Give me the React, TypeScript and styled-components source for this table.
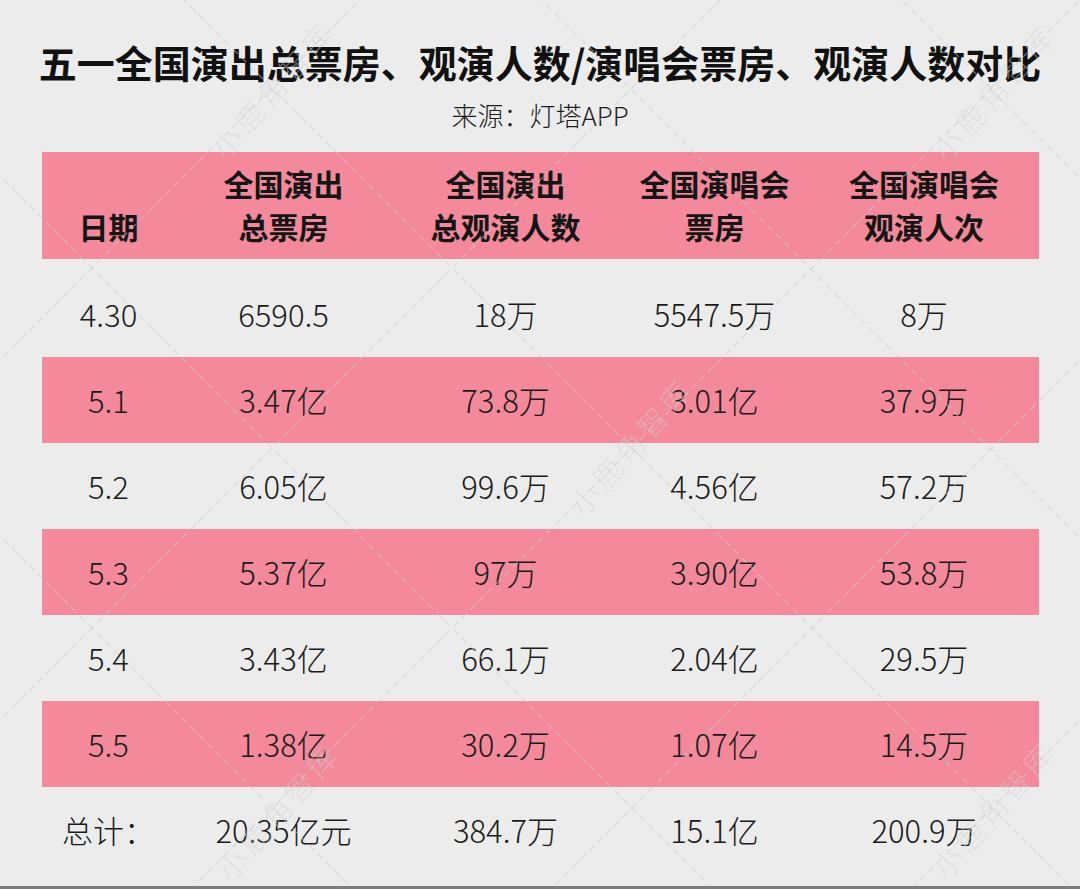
import React from "react";
import styled, { createGlobalStyle } from "styled-components";

const GlobalStyle = createGlobalStyle`
  html, body {
    margin: 0;
    padding: 0;
    background: #ececec;
  }
  body {
    font-family: "Noto Sans CJK SC", "Noto Sans", sans-serif;
  }
`;

const PINK = "#f3899a";
const COLS = "134px 216px 228px 190px 229px";

const Page = styled.div`
  position: relative;
  width: 1080px;
  height: 889px;
  box-sizing: border-box;
  background: #ececec;
  border-bottom: 3px solid #7d7d7d;
  padding-top: 40px;
  display: flex;
  flex-direction: column;
  align-items: center;
  overflow: hidden;
`;

const Title = styled.h1`
  margin: 0;
  font-size: 38px;
  line-height: 44px;
  font-weight: 700;
  color: #111;
  white-space: nowrap;
`;

const Source = styled.div`
  margin-top: 14px;
  font-size: 26px;
  line-height: 34px;
  font-weight: 300;
  color: #1e1e1e;
`;

const Table = styled.div`
  margin-top: 20px;
  width: 997px;
`;

const HeaderRow = styled.div`
  display: grid;
  grid-template-columns: ${COLS};
  align-items: end;
  height: 107px;
  box-sizing: border-box;
  padding: 10px 0 11px;
  background: ${PINK};
`;

const HeadCell = styled.div`
  display: flex;
  flex-direction: column;
  align-items: center;
  font-size: 30px;
  line-height: 43px;
  font-weight: 700;
  color: #151515;
`;

const Body = styled.div`
  margin-top: 12px;
`;

const DataRow = styled.div<{ $pink?: boolean }>`
  display: grid;
  grid-template-columns: ${COLS};
  align-items: center;
  height: 86px;
  background: ${(p) => (p.$pink ? PINK : "transparent")};
`;

const Cell = styled.div`
  text-align: center;
  font-size: 31px;
  line-height: 40px;
  font-weight: 300;
  color: #1a1a1a;
  white-space: nowrap;
`;

const Overlay = styled.svg`
  position: absolute;
  left: 0;
  top: 0;
  width: 1080px;
  height: 889px;
  pointer-events: none;
`;

const Watermark = styled.span<{ $x: number; $y: number }>`
  position: absolute;
  left: ${(p) => p.$x}px;
  top: ${(p) => p.$y}px;
  transform: translate(-50%, -50%) rotate(-49deg);
  font-size: 29px;
  line-height: 34px;
  letter-spacing: 5px;
  font-weight: 300;
  color: rgba(210, 210, 210, 0.45);
  white-space: nowrap;
  pointer-events: none;
`;

const header: string[][] = [
  ["日期"],
  ["全国演出", "总票房"],
  ["全国演出", "总观演人数"],
  ["全国演唱会", "票房"],
  ["全国演唱会", "观演人次"],
];

const rows: string[][] = [
  ["4.30", "6590.5", "18万", "5547.5万", "8万"],
  ["5.1", "3.47亿", "73.8万", "3.01亿", "37.9万"],
  ["5.2", "6.05亿", "99.6万", "4.56亿", "57.2万"],
  ["5.3", "5.37亿", "97万", "3.90亿", "53.8万"],
  ["5.4", "3.43亿", "66.1万", "2.04亿", "29.5万"],
  ["5.5", "1.38亿", "30.2万", "1.07亿", "14.5万"],
  ["总计：", "20.35亿元", "384.7万", "15.1亿", "200.9万"],
];

const downRight = [-902, -542, -184, 176, 536, 896];
const downLeft = [0, 360, 720, 1080, 1440, 1800];

const marks = [
  { x: 272, y: 88 },
  { x: 993, y: 91 },
  { x: 630, y: 445 },
  { x: 277, y: 810 },
  { x: 993, y: 808 },
];

export default function App() {
  return (
    <>
      <GlobalStyle />
      <Page>
        <Title>五一全国演出总票房、观演人数/演唱会票房、观演人数对比</Title>
        <Source>来源：灯塔APP</Source>
        <Table>
          <HeaderRow>
            {header.map((lines, i) => (
              <HeadCell key={i}>
                {lines.map((l) => (
                  <span key={l}>{l}</span>
                ))}
              </HeadCell>
            ))}
          </HeaderRow>
          <Body>
            {rows.map((r, i) => (
              <DataRow key={i} $pink={i % 2 === 1}>
                {r.map((c, j) => (
                  <Cell key={j}>{c}</Cell>
                ))}
              </DataRow>
            ))}
          </Body>
        </Table>
        <Overlay viewBox="0 0 1080 889">
          {downRight.map((c) => (
            <line
              key={"r" + c}
              x1={-200}
              y1={-200 + c}
              x2={1300}
              y2={1300 + c}
              stroke="rgba(205,205,205,0.55)"
              strokeWidth={1.2}
              strokeDasharray="7 5"
            />
          ))}
          {downLeft.map((d) => (
            <line
              key={"l" + d}
              x1={-200}
              y1={d + 200}
              x2={1300}
              y2={d - 1300}
              stroke="rgba(205,205,205,0.55)"
              strokeWidth={1.2}
              strokeDasharray="7 5"
            />
          ))}
        </Overlay>
        {marks.map((m, i) => (
          <Watermark key={i} $x={m.x} $y={m.y}>
            小鹿角智库
          </Watermark>
        ))}
      </Page>
    </>
  );
}
